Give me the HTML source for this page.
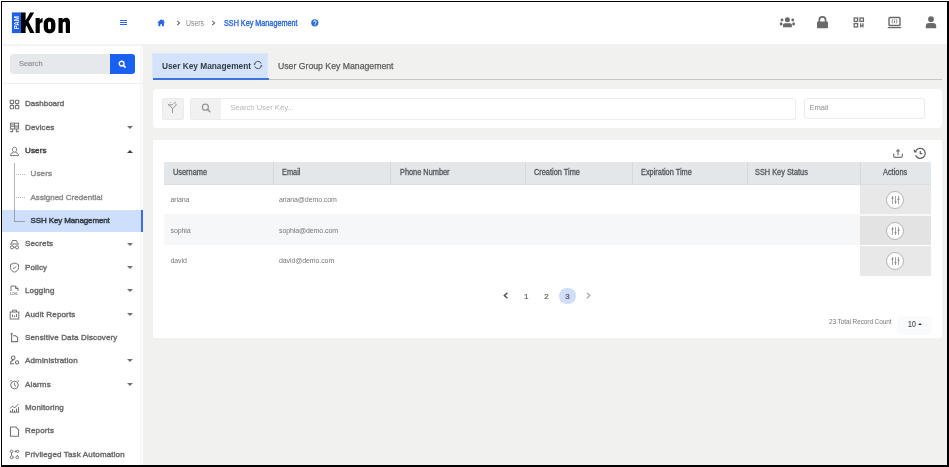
<!DOCTYPE html>
<html><head><meta charset="utf-8">
<style>
*{box-sizing:border-box;margin:0;padding:0}
html,body{width:949px;height:467px;overflow:hidden;background:#fff;font-family:"Liberation Sans",sans-serif}
.a{position:absolute}
.t{position:absolute;white-space:nowrap;line-height:12px;height:12px}
#frame{position:absolute;left:1px;top:1px;width:948px;height:466px;border-left:1px solid #000;border-top:1px solid #000;border-right:2px solid #000;border-bottom:2px solid #000;background:#fff;overflow:hidden}
#main{position:absolute;left:143px;top:44.3px;width:804px;height:421px;background:#f1f1f0}
#side{position:absolute;left:2px;top:45px;width:141px;height:420px;background:#fff;border-right:3px solid #f9f9f7}
.mi{position:absolute;left:25px;font-size:8px;color:#6a6a6a;line-height:12px;height:12px;white-space:nowrap;-webkit-text-stroke-width:0.4px;margin-top:0.8px;letter-spacing:0.15px}
.ic{position:absolute;left:9px;width:11px;height:11px}
.car{position:absolute;left:126.8px;width:0;height:0;border-left:3px solid transparent;border-right:3px solid transparent}
.dn{border-top:3.2px solid #707070}
.up{border-bottom:3.2px solid #404040}
.th{position:absolute;top:167px;font-size:8.2px;color:#50555b;line-height:12px;white-space:nowrap;transform:scaleX(.9);transform-origin:0 0;-webkit-text-stroke:0.3px #50555b}
.td{position:absolute;font-size:7px;color:#777;line-height:12px;white-space:nowrap;letter-spacing:-0.1px}
.cd{position:absolute;top:162px;width:1px;height:23px;background:#d5d8dc}
.act{position:absolute;left:860px;width:71px;background:#e8e8e8}
.circ{position:absolute;left:886px;width:18px;height:18px;border-radius:50%;border:1px solid #b5b5b5;background:#fff}
</style></head>
<body>
<div id="wrap" style="position:absolute;left:0;top:0;width:949px;height:467px;filter:blur(0.35px)">
<div id="frame"></div>
<!-- header -->
<div class="a" style="left:2px;top:2px;width:945px;height:42px;background:#fff"></div>

<!-- logo -->
<svg class="a" style="left:0;top:0" width="80" height="40" viewBox="0 0 80 40">
  <rect x="11.9" y="12.4" width="9.2" height="20.7" fill="#1f5fe8"/>
  <text x="0" y="0" transform="translate(19.2 29.3) rotate(-90)" font-family="Liberation Sans" font-weight="bold" font-size="7" fill="#fff" textLength="13" lengthAdjust="spacingAndGlyphs">PAM</text>
  <!-- K -->
  <path d="M21 12.4H25.6V20.6L30.2 12.4H34.2L28.6 21.8L34.4 33.1H30.1L26.6 25.6L25.6 27.2V33.1H21Z" fill="#000"/>
  <!-- r -->
  <path d="M35.6 18H39.8V20.2C40.6 18.6 41.6 17.9 42.6 17.9V22.2C41.2 22.2 40 22.9 39.8 24.2V33.1H35.6Z" fill="#000"/>
  <!-- o -->
  <path d="M49.5 17.8C53.4 17.8 55.4 20.2 55.4 24V27C55.4 30.8 53.4 33.3 49.5 33.3C45.7 33.3 43.7 30.8 43.7 27V24C43.7 20.2 45.7 17.8 49.5 17.8ZM49.5 21.6C48.5 21.6 48 22.4 48 23.6V27.5C48 28.7 48.5 29.5 49.5 29.5C50.6 29.5 51.1 28.7 51.1 27.5V23.6C51.1 22.4 50.6 21.6 49.5 21.6Z" fill="#000"/>
  <!-- n -->
  <path d="M58.5 18H62.6V19.8C63.4 18.5 64.6 17.8 66 17.8C68.6 17.8 70 19.6 70 22.6V33.1H65.8V23.4C65.8 22.3 65.3 21.7 64.4 21.7C63.4 21.7 62.7 22.4 62.7 23.6V33.1H58.5Z" fill="#000"/>
</svg>

<!-- hamburger -->
<div class="a" style="left:120.2px;top:19.5px;width:6.5px;height:1.3px;background:#2d66e0"></div>
<div class="a" style="left:120.2px;top:21.7px;width:6.5px;height:1.3px;background:#2d66e0"></div>
<div class="a" style="left:120.2px;top:23.9px;width:6.5px;height:1.3px;background:#2d66e0"></div>

<!-- breadcrumb -->
<svg class="a" style="left:157px;top:18.7px" width="9" height="8" viewBox="0 0 9 8">
  <path d="M4.1 0.3L0.2 3.8H1.4V7.3H3.3V5.2H5V7.3H6.9V3.8H8.1L6.8 2.6V0.8H5.7V1.6Z" fill="#2a64e6"/>
</svg>
<svg class="a" style="left:175.5px;top:19.5px" width="6" height="7" viewBox="0 0 6 7"><path d="M1.2 0.8L3.6 2.9L1.2 5" stroke="#6a6a6a" stroke-width="1.1" fill="none"/></svg>
<div class="t" style="left:186px;top:16.5px;font-size:8.5px;color:#858585;transform:scaleX(.81);transform-origin:0 0">Users</div>
<svg class="a" style="left:210.5px;top:19.5px" width="6" height="7" viewBox="0 0 6 7"><path d="M1.2 0.8L3.6 2.9L1.2 5" stroke="#6a6a6a" stroke-width="1.1" fill="none"/></svg>
<div class="t" style="left:223.5px;top:16.5px;font-size:8.5px;color:#2f6bdc;transform:scaleX(.85);transform-origin:0 0;-webkit-text-stroke:0.4px #2f6bdc">SSH Key Management</div>
<svg class="a" style="left:311px;top:19px" width="8" height="8" viewBox="0 0 8 8">
  <circle cx="3.8" cy="3.8" r="3.6" fill="#2f6bdc"/>
  <path d="M2.6 3C2.6 2.2 3.1 1.7 3.9 1.7C4.7 1.7 5.2 2.2 5.2 2.9C5.2 3.8 4.2 3.9 4.2 4.8" stroke="#fff" stroke-width="1" fill="none"/>
  <rect x="3.6" y="5.4" width="1.1" height="1" fill="#fff"/>
</svg>

<!-- header right icons -->
<svg class="a" style="left:779px;top:16px" width="17" height="12" viewBox="0 0 17 12">
  <circle cx="8.4" cy="3.65" r="2.5" fill="#6a6a6a"/>
  <circle cx="3" cy="4" r="1.4" fill="#6a6a6a"/>
  <circle cx="13.8" cy="4" r="1.4" fill="#6a6a6a"/>
  <path d="M4 11.2V9C4 7.9 4.8 7.2 5.8 7.2H11.1C12.1 7.2 12.9 7.9 12.9 9V11.2Z" fill="#6a6a6a"/>
  <ellipse cx="2.1" cy="7.9" rx="1.4" ry="1.6" fill="#6a6a6a"/>
  <ellipse cx="14.6" cy="7.9" rx="1.4" ry="1.6" fill="#6a6a6a"/>
</svg>
<svg class="a" style="left:816px;top:16px" width="13" height="13" viewBox="0 0 13 13">
  <path d="M3.3 6V4.2C3.3 2.2 4.6 0.9 6.4 0.9C8.3 0.9 9.6 2.2 9.6 4.2V6" stroke="#6a6a6a" stroke-width="1.7" fill="none"/>
  <rect x="1" y="5.6" width="11" height="6.6" rx="1" fill="#6a6a6a"/>
</svg>
<svg class="a" style="left:853px;top:17px" width="12" height="11" viewBox="0 0 12 11">
  <rect x="1.2" y="1" width="3.4" height="3.4" stroke="#6a6a6a" stroke-width="1.3" fill="none"/>
  <rect x="7" y="1" width="3.4" height="3.4" stroke="#6a6a6a" stroke-width="1.3" fill="none"/>
  <rect x="1.2" y="6.6" width="3.4" height="3.4" stroke="#6a6a6a" stroke-width="1.3" fill="none"/>
  <path d="M7 10.5V6.3H8.3V8.2H9.2V6.3H10.6V10.5H9.4V9.4H8.2V10.5Z" fill="#6a6a6a"/>
</svg>
<svg class="a" style="left:887px;top:16px" width="15" height="13" viewBox="0 0 15 13">
  <rect x="2" y="1.5" width="11" height="8" rx="0.8" stroke="#6a6a6a" stroke-width="1.4" fill="none"/>
  <path d="M5.8 3.4C5 4.2 5 6.6 5.8 7.4M9.2 3.4C10 4.2 10 6.6 9.2 7.4" stroke="#6a6a6a" stroke-width="0.9" fill="none"/>
  <rect x="7.1" y="4.8" width="0.9" height="2.2" fill="#6a6a6a"/>
  <rect x="7.1" y="3.6" width="0.9" height="0.8" fill="#6a6a6a"/>
  <rect x="0.8" y="11" width="13.4" height="1.2" fill="#6a6a6a"/>
</svg>
<svg class="a" style="left:925px;top:16px" width="12" height="13" viewBox="0 0 12 13">
  <circle cx="6" cy="3.2" r="2.9" fill="#6a6a6a"/>
  <path d="M0.8 12.2V9.8C0.8 8 2 6.9 4 6.9H8C10 6.9 11.2 8 11.2 9.8V12.2Z" fill="#6a6a6a"/>
</svg>

<!-- sidebar -->
<div id="side"></div>
<div class="a" style="left:2px;top:44.3px;width:141px;height:1.6px;background:#f3f3f3"></div>
<div class="a" style="left:2px;top:83px;width:141px;height:1px;background:#efefef"></div>
<div class="a" style="left:10px;top:54px;width:102px;height:20px;background:#e6e9eb;border-radius:3px 0 0 3px"></div>
<div class="t" style="left:19px;top:58px;font-size:8px;color:#8a8a8a;transform:scaleX(.93);transform-origin:0 0;-webkit-text-stroke:0.15px #8a8a8a">Search</div>
<div class="a" style="left:110px;top:54px;width:25px;height:20px;background:#1a60f0;border-radius:0 3px 3px 0"></div>
<svg class="a" style="left:118px;top:60px" width="9" height="9" viewBox="0 0 9 9">
  <circle cx="3.6" cy="3.6" r="2.4" stroke="#fff" stroke-width="1.4" fill="none"/>
  <path d="M5.4 5.4L7.6 7.6" stroke="#fff" stroke-width="1.6"/>
</svg>

<!-- menu items -->
<svg class="ic" style="top:99px" viewBox="0 0 11 11"><g stroke="#747474" stroke-width="1.1" fill="none"><rect x="1.2" y="1.2" width="3.4" height="3.4" rx="0.6"/><rect x="6.4" y="1.2" width="3.4" height="3.4" rx="0.9"/><rect x="1.2" y="6.4" width="3.4" height="3.4" rx="0.9"/><rect x="6.4" y="6.4" width="3.4" height="3.4" rx="0.6"/></g></svg>
<div class="mi" style="top:97.5px;letter-spacing:0">Dashboard</div>

<svg class="ic" style="top:121.7px" viewBox="0 0 11 11"><g stroke="#787878" stroke-width="1.1" fill="none"><rect x="1.5" y="1.2" width="8" height="5.8"/><path d="M5.5 1.2V7M1.5 4.1H9.5M3.5 7V9.4M7.5 7V9.4M1.2 9.6H4.2M6.8 9.6H9.8"/></g><rect x="2" y="1.7" width="3" height="2" fill="#bdbdbd"/><rect x="6" y="4.6" width="3" height="2" fill="#bdbdbd"/></svg>
<div class="mi" style="top:120.9px">Devices</div>
<div class="car dn" style="top:126px"></div>

<svg class="ic" style="top:145.5px" viewBox="0 0 11 11"><g stroke="#747474" stroke-width="1" fill="none"><path d="M5.5 1.2C7 1.2 7.6 2.3 7.6 3.7C7.6 5.1 6.8 6.2 5.5 6.2C4.2 6.2 3.4 5.1 3.4 3.7C3.4 2.3 4 1.2 5.5 1.2Z"/><path d="M4.3 6.1C4.3 6.8 1.6 7.2 1.6 8.6V9.6H9.4V8.6C9.4 7.2 6.7 6.8 6.7 6.1"/></g></svg>
<div class="mi" style="top:144.2px;color:#484848;-webkit-text-stroke-width:0.5px">Users</div>
<div class="car up" style="top:149.5px"></div>

<!-- tree -->
<div class="a" style="left:14.2px;top:162.5px;width:1px;height:58px;background:#b4b4b4"></div>
<div class="a" style="left:16px;top:174px;width:9px;height:0;border-top:1px dotted #bdbdbd"></div>
<div class="a" style="left:16px;top:197px;width:9px;height:0;border-top:1px dotted #bdbdbd"></div>
<div class="mi" style="left:30.5px;top:167.6px;color:#8c8c8c">Users</div>
<div class="mi" style="left:30.5px;top:191.0px;color:#8c8c8c;letter-spacing:0.02px">Assigned Credential</div>
<div class="a" style="left:2px;top:209.5px;width:141px;height:22.5px;background:#cddffb"></div>
<div class="a" style="left:141px;top:209.5px;width:2px;height:22.5px;background:#3a70dd"></div>
<div class="a" style="left:14.2px;top:209px;width:1px;height:12px;background:#97a0ad"></div>
<div class="a" style="left:14.2px;top:220.5px;width:11px;height:1px;background:#97a0ad"></div>
<div class="mi" style="left:30.5px;top:214.4px;color:#333b48;-webkit-text-stroke-width:0.45px;letter-spacing:-0.12px">SSH Key Management</div>

<svg class="ic" style="top:238.5px" viewBox="0 0 11 11"><g stroke="#747474" stroke-width="1" fill="none"><path d="M2.5 4.5L3.5 1.5H7.5L8.5 4.5M0.8 5H10.2"/><circle cx="3" cy="8.3" r="1.6"/><circle cx="8" cy="8.3" r="1.6"/><path d="M4.6 8.3H6.4"/></g></svg>
<div class="mi" style="top:237.7px">Secrets</div>
<div class="car dn" style="top:242.5px"></div>

<svg class="ic" style="top:262px" viewBox="0 0 11 11"><g stroke="#747474" stroke-width="1" fill="none"><path d="M5.5 1L9.5 2.5V5.5C9.5 8 7.5 9.5 5.5 10.2C3.5 9.5 1.5 8 1.5 5.5V2.5Z"/><path d="M3.8 5.5L5 6.7L7.2 4.3"/></g></svg>
<div class="mi" style="top:261.1px">Policy</div>
<div class="car dn" style="top:265.5px"></div>

<svg class="ic" style="top:285px" viewBox="0 0 11 11"><g stroke="#747474" stroke-width="1" fill="none"><path d="M2 6V1H6.5L9 3.5V6M6.5 1V3.5H9"/></g><text x="1.2" y="10.3" font-size="3.4" font-weight="bold" fill="#747474" font-family="Liberation Sans">LOG</text></svg>
<div class="mi" style="top:284.5px">Logging</div>
<div class="car dn" style="top:289px"></div>

<svg class="ic" style="top:308.5px" viewBox="0 0 11 11"><g stroke="#747474" stroke-width="1" fill="none"><rect x="1.2" y="3" width="8.6" height="7"/><path d="M3.5 3V1.2H7.5V3M3.5 5.5V8M5.5 6.5V8M7.5 5V8"/></g></svg>
<div class="mi" style="top:307.8px">Audit Reports</div>
<div class="car dn" style="top:312.5px"></div>

<svg class="ic" style="top:331.5px" viewBox="0 0 11 11"><g stroke="#747474" stroke-width="1.1" fill="none"><path d="M2.6 2.4V9.6H8.6V5.4L6.6 3.8H4"/></g><circle cx="2.6" cy="1.8" r="1.1" fill="#747474"/></svg>
<div class="mi" style="top:331.2px">Sensitive Data Discovery</div>

<svg class="ic" style="top:355px" viewBox="0 0 11 11"><g stroke="#747474" stroke-width="1.1" fill="none"><circle cx="4.2" cy="2.8" r="1.8"/><path d="M1.4 8.8C1.4 6.6 2.6 5.4 4.4 5.4"/><circle cx="8.1" cy="7.4" r="1.6"/><path d="M1.4 8.8H5"/></g></svg>
<div class="mi" style="top:354.6px">Administration</div>
<div class="car dn" style="top:359px"></div>

<svg class="ic" style="top:378.5px" viewBox="0 0 11 11"><g stroke="#747474" stroke-width="1" fill="none"><circle cx="5.5" cy="6" r="3.8"/><path d="M5.5 3.8V6.2L7 7.2M1 2.6L2.6 1M10 2.6L8.4 1"/></g></svg>
<div class="mi" style="top:377.9px">Alarms</div>
<div class="car dn" style="top:382.5px"></div>

<svg class="ic" style="top:402px" viewBox="0 0 11 11"><g stroke="#747474" stroke-width="1" fill="none"><path d="M1 6.5L3.5 4L5.5 6L9.5 2"/><path d="M1.5 10V8.5M3.5 10V7M5.5 10V8.5M7.5 10V6.5M9.5 10V5M0.8 10.2H10.2"/></g></svg>
<div class="mi" style="top:401.3px">Monitoring</div>

<svg class="ic" style="top:425.5px" viewBox="0 0 11 11"><g stroke="#747474" stroke-width="1.1" fill="none"><path d="M1.5 1H6.8L9.5 3.7V10.2H1.5Z"/></g></svg>
<div class="mi" style="top:424.7px">Reports</div>

<svg class="ic" style="top:449px" viewBox="0 0 11 11"><g stroke="#747474" stroke-width="1" fill="none"><circle cx="2.6" cy="2.4" r="1.3"/><circle cx="2.6" cy="8.3" r="1.4"/><circle cx="8.3" cy="8.4" r="1.4"/><path d="M2.6 3.7V6.9M4 8.3L4.8 8.3M8.3 7L8.3 6.2"/><circle cx="8.7" cy="2.4" r="1.1"/></g><path d="M5.2 2.4L7.4 1.1V3.7Z" fill="#747474"/></svg>
<div class="mi" style="top:448.1px">Privileged Task Automation</div>

<!-- main -->
<div id="main"></div>
<!-- tabs -->
<div class="a" style="left:152.3px;top:52.7px;width:116px;height:25.5px;background:#d4e2fb;border:1px solid #dde7f9;border-bottom:none"></div>
<div class="a" style="left:152.5px;top:78px;width:116.5px;height:2px;background:#3b74df"></div>
<div class="a" style="left:269px;top:78.8px;width:673px;height:1px;background:#c6c6c6"></div>
<div class="t" style="left:161.5px;top:60px;font-size:9.5px;font-weight:bold;color:#343b47;transform:scaleX(.873);transform-origin:0 0">User Key Management</div>
<svg class="a" style="left:252px;top:59px" width="12" height="12" viewBox="0 0 12 12">
  <path d="M2.6 5.4A3.4 3.4 0 0 1 9.2 4.6M9.4 6.6A3.4 3.4 0 0 1 2.8 7.4" stroke="#4d5561" stroke-width="1" fill="none"/>
  <path d="M1.3 4.7H3.9L2.6 6.3Z M10.7 7.3H8.1L9.4 5.7Z" fill="#4d5561"/>
</svg>
<div class="t" style="left:277.5px;top:60px;font-size:9.5px;color:#5a5a5a;transform:scaleX(.915);transform-origin:0 0;-webkit-text-stroke:0.25px #5a5a5a">User Group Key Management</div>

<!-- filter card -->
<div class="a" style="left:152.5px;top:89px;width:789.5px;height:39px;background:#fff;border-radius:4px"></div>
<div class="a" style="left:161.5px;top:97.5px;width:22.5px;height:22px;background:#f1f1f1;border:1px solid #ebebeb;border-radius:2px"></div>
<svg class="a" style="left:167px;top:100px" width="11" height="14" viewBox="0 0 11 14">
  <g stroke="#959595" stroke-width="1" fill="none" stroke-linecap="round"><path d="M1.5 4.8L5.5 8.6L9.5 4.8M5.5 8.6V12.6M1.5 4.8H5.5"/><path d="M3.6 2.7L3.7 2.8M6.8 3.4L8.4 2.2M8.6 4.2L8.7 4.3"/></g>
</svg>
<div class="a" style="left:190.3px;top:97.5px;width:31px;height:22px;background:#f1f1f1;border:1px solid #ebebeb;border-right:none;border-radius:3px 0 0 3px"></div>
<svg class="a" style="left:200px;top:102px" width="12" height="12" viewBox="0 0 12 12">
  <circle cx="5.4" cy="5.2" r="3" stroke="#959595" stroke-width="1.25" fill="none"/>
  <path d="M7.6 7.4L9.9 9.7" stroke="#959595" stroke-width="1.5" stroke-linecap="round"/>
</svg>
<div class="a" style="left:221px;top:97.5px;width:575px;height:22px;background:#fff;border:1px solid #eeeeee;border-left:none;border-radius:0 3px 3px 0"></div>
<div class="t" style="left:230.5px;top:101.5px;font-size:7.8px;color:#b8b8b8;letter-spacing:-0.1px">Search User Key...</div>
<div class="a" style="left:804px;top:97.5px;width:121px;height:21.5px;background:#fff;border:1px solid #ececec;border-radius:3px"></div>
<div class="t" style="left:809.5px;top:101.5px;font-size:7.5px;color:#9a9a9a;-webkit-text-stroke:0.1px #9a9a9a">Email</div>

<!-- table card -->
<div class="a" style="left:152.7px;top:140px;width:789.8px;height:198px;background:#fff;border-radius:1px"></div>
<svg class="a" style="left:892px;top:147px" width="12" height="12" viewBox="0 0 12 12">
  <g stroke="#777" stroke-width="1.2" fill="none"><path d="M1.6 6.8V8.8C1.6 9.8 2.2 10.4 3.2 10.4H8.8C9.8 10.4 10.4 9.8 10.4 8.8V6.8"/><path d="M6 8.2V3"/></g>
  <path d="M3.6 4.6L6 1.8L8.4 4.6Z" fill="#777"/>
</svg>
<svg class="a" style="left:913px;top:147px" width="14" height="13" viewBox="0 0 14 13">
  <g stroke="#646464" stroke-width="1.3" fill="none"><path d="M2.8 4A5 5 0 1 1 2.6 8.2"/><path d="M7.3 4V6.6H9.4"/></g>
  <path d="M0.7 1.9L4.3 5.3L0.9 5.6Z" fill="#646464"/>
</svg>

<!-- table header -->
<div class="a" style="left:163.5px;top:162px;width:767.5px;height:23px;background:#e4e7ea;border-bottom:1px solid #dcdfe2"></div>
<div class="cd" style="left:272.5px"></div>
<div class="cd" style="left:390px"></div>
<div class="cd" style="left:524.5px"></div>
<div class="cd" style="left:631.5px"></div>
<div class="cd" style="left:746.5px"></div>
<div class="cd" style="left:860px"></div>
<div class="th" style="left:172.5px">Username</div>
<div class="th" style="left:281.5px">Email</div>
<div class="th" style="left:399.5px">Phone Number</div>
<div class="th" style="left:534px">Creation Time</div>
<div class="th" style="left:641px">Expiration Time</div>
<div class="th" style="left:755px">SSH Key Status</div>
<div class="th" style="left:882.8px">Actions</div>

<!-- rows -->
<div class="a" style="left:163.5px;top:214.3px;width:767.5px;height:31.2px;background:#f6f7f8"></div>
<div class="act" style="top:185px;height:29px"></div>
<div class="act" style="top:215.5px;height:29.5px;background:#e3e3e3"></div>
<div class="act" style="top:246.3px;height:29.7px"></div>
<div class="circ" style="top:190.9px"></div>
<div class="circ" style="top:221.8px"></div>
<div class="circ" style="top:251.6px"></div>
<svg class="a" style="left:890.7px;top:195.9px" width="9" height="8" viewBox="0 0 9 8"><g stroke="#8d8d8d" stroke-width="0.8"><path d="M1.5 0V8M4.5 0V8M7.5 0V8"/></g><g fill="#8d8d8d"><rect x="0.5" y="1.3" width="2" height="1.6" rx="0.6"/><rect x="3.5" y="4.8" width="2" height="1.6" rx="0.6"/><rect x="6.5" y="2.4" width="2" height="1.6" rx="0.6"/></g></svg>
<svg class="a" style="left:890.7px;top:226.8px" width="9" height="8" viewBox="0 0 9 8"><g stroke="#8d8d8d" stroke-width="0.8"><path d="M1.5 0V8M4.5 0V8M7.5 0V8"/></g><g fill="#8d8d8d"><rect x="0.5" y="1.3" width="2" height="1.6" rx="0.6"/><rect x="3.5" y="4.8" width="2" height="1.6" rx="0.6"/><rect x="6.5" y="2.4" width="2" height="1.6" rx="0.6"/></g></svg>
<svg class="a" style="left:890.7px;top:256.6px" width="9" height="8" viewBox="0 0 9 8"><g stroke="#8d8d8d" stroke-width="0.8"><path d="M1.5 0V8M4.5 0V8M7.5 0V8"/></g><g fill="#8d8d8d"><rect x="0.5" y="1.3" width="2" height="1.6" rx="0.6"/><rect x="3.5" y="4.8" width="2" height="1.6" rx="0.6"/><rect x="6.5" y="2.4" width="2" height="1.6" rx="0.6"/></g></svg>

<div class="td" style="left:170.5px;top:194px">ariana</div>
<div class="td" style="left:279px;top:194px">ariana@demo.com</div>
<div class="td" style="left:170.5px;top:224.5px">sophia</div>
<div class="td" style="left:279px;top:224.5px">sophia@demo.com</div>
<div class="td" style="left:170.5px;top:254.5px">david</div>
<div class="td" style="left:279px;top:254.5px">david@demo.com</div>

<!-- pagination -->
<svg class="a" style="left:502px;top:292px" width="8" height="8" viewBox="0 0 8 8"><path d="M5.4 0.9L2.3 3.6L5.4 6.3" stroke="#555" stroke-width="1.4" fill="none"/></svg>
<div class="t" style="left:524px;top:291px;font-size:8px;color:#666;-webkit-text-stroke:0.2px #666">1</div>
<div class="t" style="left:544.2px;top:291px;font-size:8px;color:#666;-webkit-text-stroke:0.2px #666">2</div>
<div class="a" style="left:559.2px;top:287.7px;width:16.6px;height:16.6px;border-radius:50%;background:#cfdefa"></div>
<div class="t" style="left:565.3px;top:291px;font-size:8px;color:#555;-webkit-text-stroke:0.2px #555">3</div>
<svg class="a" style="left:585px;top:292px" width="8" height="8" viewBox="0 0 8 8"><path d="M1.8 0.9L4.9 3.6L1.8 6.3" stroke="#9a9a9a" stroke-width="1.1" fill="none"/></svg>

<div class="t" style="left:829px;top:315.5px;font-size:6.5px;color:#777;letter-spacing:-0.1px">23 Total Record Count</div>
<div class="a" style="left:897px;top:315.5px;width:35px;height:19px;background:#f9fafb;border-radius:5px"></div>
<div class="t" style="left:908.3px;top:317.8px;font-size:8.5px;color:#484848;transform:scaleX(.82);transform-origin:0 0;-webkit-text-stroke:0.15px #484848">10</div>
<div class="a" style="left:918.3px;top:323.3px;width:0;height:0;border-left:2px solid transparent;border-right:2px solid transparent;border-bottom:2.2px solid #3a3a3a"></div>

</div>
</body></html>
